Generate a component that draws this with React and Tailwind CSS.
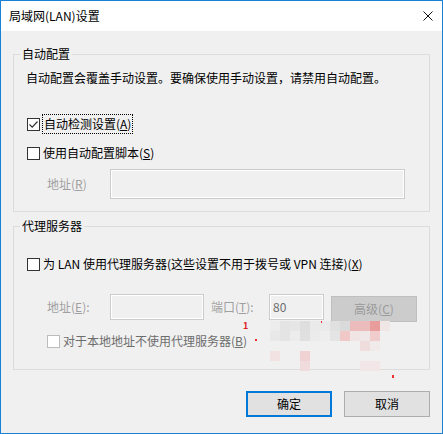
import React from "react";

const font = { fontFamily: '"Noto Sans CJK SC", "Noto Sans", sans-serif' };

function Box({ checked, disabled }) {
  return (
    <span
      className={
        "relative flex h-[13px] w-[13px] shrink-0 items-center justify-center border bg-white " +
        (disabled ? "border-[#bcbcbc]" : "border-[#333333]")
      }
    >
      {checked && (
        <svg width="11" height="11" viewBox="0 0 11 11" className="block">
          <path d="M1.5 5.5 L4.2 8.2 L9.5 2.5" fill="none" stroke="#333333" strokeWidth="1.2" />
        </svg>
      )}
    </span>
  );
}

const mosaic = [
  [270, 321, "#ececec"], [280, 321, "#e4e4e4"], [290, 321, "#e6e6e6"], [300, 321, "#dedede"],
  [310, 321, "#eaeaea"], [320, 321, "#eaeaea"], [330, 321, "#e0e0e0"], [340, 321, "#dadada"],
  [350, 321, "#ecbcbc"], [360, 321, "#ecbcbc"], [370, 321, "#e89c9c"], [380, 321, "#efe6e6"],
  [270, 331, "#e8e8e8"], [280, 331, "#e4e4e4"], [290, 331, "#ececec"], [300, 331, "#e0e0e0"],
  [310, 331, "#ebebeb"], [320, 331, "#eeeeee"], [330, 331, "#e4e4e4"], [340, 331, "#f0c8c8"],
  [350, 331, "#f0e4e4"], [360, 331, "#f0e8e8"], [370, 331, "#f0cccc"],
  [360, 341, "#efdcdc"], [370, 341, "#f0eaea"],
  [270, 351, "#f2e2e2"], [300, 351, "#f0d2d2"],
  [300, 361, "#f0dcdc"], [360, 361, "#f2e6e6"], [370, 361, "#f2e6e6"],
];

export default function App() {
  return (
    <div
      style={font}
      className="relative flex h-[434px] w-[443px] flex-col border border-[#1a82d6] bg-[#f0f0f0] text-[12px] leading-[16px] text-black"
    >
      {/* title bar */}
      <div className="flex h-[30px] shrink-0 items-center justify-between bg-white pl-[8px] pr-[9px]">
        <span>局域网(LAN)设置</span>
        <svg width="10" height="10" viewBox="0 0 10 10" className="block">
          <path d="M0.5 0.5 L9.5 9.5 M9.5 0.5 L0.5 9.5" stroke="#111" strokeWidth="1" fill="none" />
        </svg>
      </div>

      <div className="flex flex-1 flex-col px-3 pt-[15px]">
        {/* group 1 */}
        <fieldset className="m-0 border border-[#dcdcdc] p-0">
          <legend className="ml-[6px] px-[2px] leading-[16px]">自动配置</legend>
          <div className="mt-[8px] pl-[12px]">
            自动配置会覆盖手动设置。要确保使用手动设置，请禁用自动配置。
          </div>
          <div className="mt-[28px] flex h-[20px] items-center pl-[13px]">
            <Box checked />
            <span className="ml-[2px] flex h-[20px] items-center border border-dotted border-black px-[1px]">
              自动检测设置(<u>A</u>)
            </span>
          </div>
          <div className="mt-[9px] flex h-[20px] items-center pl-[13px]">
            <Box />
            <span className="ml-[3px]">
              使用自动配置脚本(<u>S</u>)
            </span>
          </div>
          <div className="mt-[6px] flex items-center pb-[12px] pl-[33px]">
            <span className="w-[63px] text-[#a0a0a0]">
              地址(<u>R</u>)
            </span>
            <div className="h-[30px] w-[295px] border border-[#cccccc] bg-[#f0f0f0] shadow-[inset_0_0_0_1px_#ffffff]" />
          </div>
        </fieldset>

        {/* group 2 */}
        <fieldset className="m-0 mt-[6px] border border-[#dcdcdc] p-0">
          <legend className="ml-[6px] px-[2px] leading-[16px]">代理服务器</legend>
          <div className="mt-[20px] flex h-[20px] items-center pl-[13px]">
            <Box />
            <span className="ml-[3px]">
              为 LAN 使用代理服务器(这些设置不用于拨号或 VPN 连接)(<u>X</u>)
            </span>
          </div>
          <div className="mt-[20px] flex items-start pl-[33px]">
            <span className="flex h-[26px] w-[63px] items-center text-[#a0a0a0]">
              地址(<u>E</u>):
            </span>
            <div className="h-[26px] w-[94px] border border-[#cccccc] bg-[#f0f0f0] shadow-[inset_0_0_0_1px_#ffffff]" />
            <span className="ml-[7px] flex h-[26px] w-[58px] items-center text-[#a0a0a0]">
              端口(<u>T</u>):
            </span>
            <div className="flex h-[26px] w-[55px] items-center border border-[#cccccc] bg-[#f0f0f0] pl-[3px] text-[#6d6d6d] shadow-[inset_0_0_0_1px_#ffffff]">
              80
            </div>
            <div className="ml-[7px] mt-[2px] flex h-[26px] w-[86px] items-center justify-center border border-[#bfbfbf] bg-[#cccccc] text-[#9a9a9a]">
              高级(<u>C</u>)
            </div>
          </div>
          <div className="mt-[9px] flex h-[20px] items-center pb-0 pl-[33px]">
            <Box disabled />
            <span className="ml-[3px] text-[#6d6d6d]">
              对于本地地址不使用代理服务器(<u>B</u>)
            </span>
          </div>
          <div className="h-[18px]" />
        </fieldset>

        {/* buttons */}
        <div className="mt-[21px] flex justify-end gap-[12px]">
          <button className="flex h-[26px] w-[86px] items-center justify-center border-2 border-[#0078d7] bg-[#e1e1e1]">
            确定
          </button>
          <button className="flex h-[26px] w-[86px] items-center justify-center border border-[#adadad] bg-[#e1e1e1]">
            取消
          </button>
        </div>
      </div>

      {/* mosaic watermark overlay */}
      {mosaic.map(([x, y, c], i) => (
        <div
          key={i}
          className="absolute h-[10px] w-[10px]"
          style={{ left: x - 1, top: y - 1, backgroundColor: c }}
        />
      ))}
      <span className="absolute left-[242px] top-[320px] text-[9px] font-bold leading-[10px] text-[#e02020]">
        1
      </span>
      <div className="absolute left-[254px] top-[338px] h-[2px] w-[2px] bg-[#e83030]" />
      <div className="absolute left-[320px] top-[320px] h-[2px] w-[1px] bg-[#e83030]" />
      <div className="absolute left-[391px] top-[374px] h-[3px] w-[2px] bg-[#f03030]" />
    </div>
  );
}
